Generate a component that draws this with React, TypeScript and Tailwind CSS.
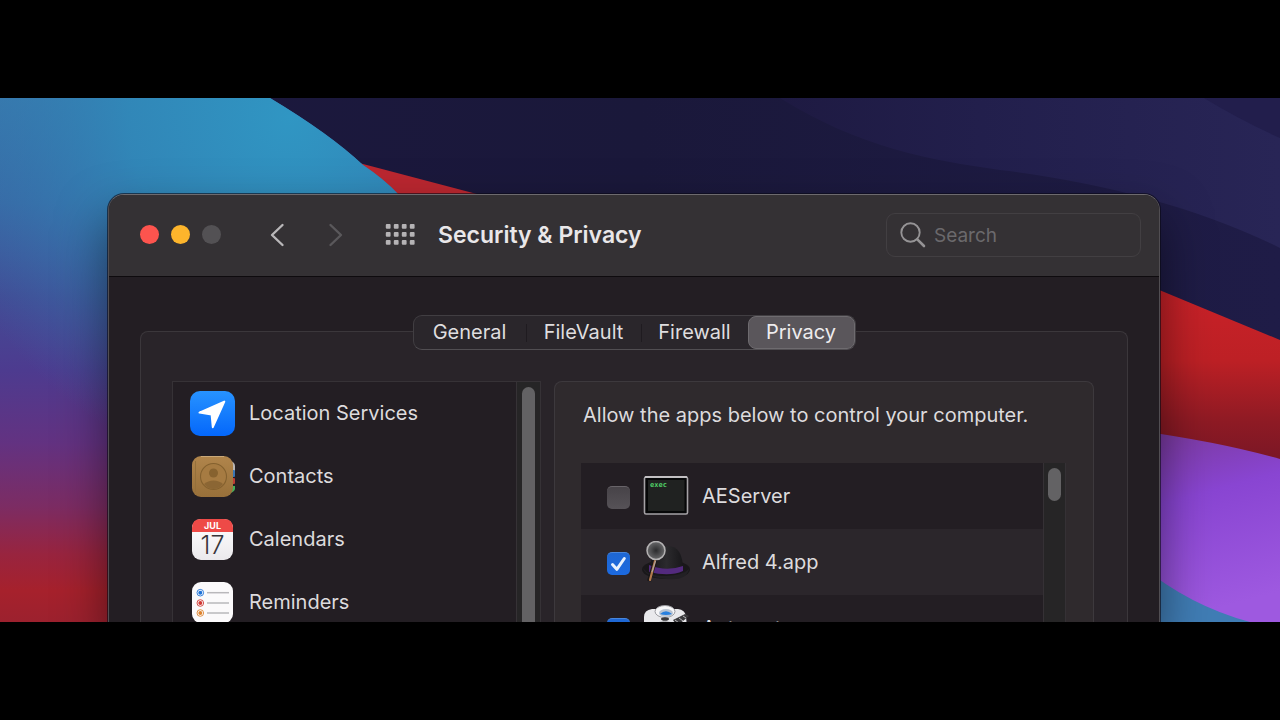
import { useState } from "react";
import type { ReactNode } from "react";

function Wallpaper() {
  return (
    <svg
      aria-hidden="true"
      className="absolute inset-0 h-full w-full"
      viewBox="0 0 1280 524"
      preserveAspectRatio="xMidYMid slice"
    >
      <defs>
        <linearGradient id="dusk" x1="0" y1="0" x2="0" y2="1">
          <stop offset="0" stopColor="#3878ad" />
          <stop offset="0.2" stopColor="#3968a5" />
          <stop offset="0.38" stopColor="#424b95" />
          <stop offset="0.52" stopColor="#4d3b8f" />
          <stop offset="0.66" stopColor="#633281" />
          <stop offset="0.78" stopColor="#7c2c63" />
          <stop offset="0.87" stopColor="#98243f" />
          <stop offset="0.94" stopColor="#a6212c" />
          <stop offset="1" stopColor="#9c212e" />
        </linearGradient>
        <radialGradient id="lagoon" gradientUnits="userSpaceOnUse" cx="290" cy="20" r="360">
          <stop offset="0" stopColor="#3096c3" />
          <stop offset="0.45" stopColor="#308aba" stopOpacity="0.85" />
          <stop offset="1" stopColor="#3474ab" stopOpacity="0" />
        </radialGradient>
        <linearGradient id="night" x1="0" y1="0" x2="1" y2="0">
          <stop offset="0" stopColor="#1c183f" />
          <stop offset="0.5" stopColor="#1a183a" />
          <stop offset="1" stopColor="#1f1c47" />
        </linearGradient>
        <linearGradient id="nightBand" x1="0" y1="0" x2="1" y2="0">
          <stop offset="0" stopColor="#1e1a42" />
          <stop offset="0.4" stopColor="#221f4c" />
          <stop offset="1" stopColor="#282556" />
        </linearGradient>
        <linearGradient id="ember" x1="0" y1="0" x2="0" y2="1">
          <stop offset="0" stopColor="#cb2229" />
          <stop offset="0.4" stopColor="#bd2025" />
          <stop offset="0.72" stopColor="#8d1a24" />
          <stop offset="1" stopColor="#721526" />
        </linearGradient>
        <linearGradient id="violet" x1="0" y1="0" x2="0.2" y2="1">
          <stop offset="0" stopColor="#7a399b" />
          <stop offset="0.4" stopColor="#8945d2" />
          <stop offset="1" stopColor="#9e59e0" />
        </linearGradient>
      </defs>
      <rect width="1280" height="524" fill="url(#night)" />
      <path d="M780 0C860 50 930 62 1000 72C1100 84 1200 110 1280 150V0Z" fill="url(#nightBand)" />
      <path d="M1204 0Q1240 22 1280 40V0Z" fill="#221e4c" />
      <path d="M340 59L363 66L492 100V130H340Z" fill="#bb2730" />
      <path d="M0 0H270Q330 36 363 67Q384 81 398 96L440 150V524H0Z" fill="url(#dusk)" />
      <path d="M0 0H270Q330 36 363 67Q384 81 398 96L440 150V400H0Z" fill="url(#lagoon)" />
      <path d="M1140 184L1280 242V380H1140Z" fill="url(#ember)" />
      <path d="M1140 333Q1220 344 1280 361V524H1140Z" fill="url(#violet)" />
      <path d="M1140 467Q1190 508 1250 524H1140Z" fill="#407db5" />
    </svg>
  );
}

function LocationIcon() {
  return (
    <svg viewBox="0 0 45 45" className="size-[45px]" aria-hidden="true">
      <defs>
        <linearGradient id="locBg" x1="0" y1="0" x2="0" y2="1">
          <stop offset="0" stopColor="#2793ff" />
          <stop offset="1" stopColor="#0467fb" />
        </linearGradient>
      </defs>
      <rect width="45" height="45" rx="10" fill="url(#locBg)" />
      <path
        d="M34.3 10.6L9.5 21.6L21.6 23.4L22.8 36.2Z"
        fill="#fff"
        stroke="#fff"
        strokeWidth="2"
        strokeLinejoin="round"
      />
    </svg>
  );
}

function ContactsIcon() {
  return (
    <svg viewBox="0 0 45 45" className="size-[45px]" aria-hidden="true">
      <defs>
        <linearGradient id="leather" x1="0" y1="0" x2="0" y2="1">
          <stop offset="0" stopColor="#b0854b" />
          <stop offset="1" stopColor="#98703a" />
        </linearGradient>
      </defs>
      <path d="M40 7Q45 8 45 12V17H40Z" fill="#b9b5b3" />
      <rect x="40" y="16" width="5" height="7" rx="1" fill="#3a76b4" />
      <rect x="40" y="24" width="5" height="6" rx="1" fill="#bf3d33" />
      <path d="M40 32H45V35Q44 38 40 39Z" fill="#42b35c" />
      <rect x="2" y="2" width="41" height="41" rx="9" fill="url(#leather)" />
      <path d="M11 2.500H34" stroke="#c9a878" strokeWidth="1" />
      <path d="M5.500 7V38" stroke="#94703b" strokeWidth="1" />
      <circle cx="23.500" cy="22.500" r="13" fill="#a67b42" stroke="#84612f" strokeWidth="1.100" />
      <circle cx="23.500" cy="19" r="4.500" fill="#87622f" />
      <path d="M14 30Q18 26.500 23.500 26.500T33 30Q29 35 23.500 35T14 30Z" fill="#8b6634" />
    </svg>
  );
}

function CalendarIcon() {
  return (
    <svg viewBox="0 0 45 45" className="size-[45px]" aria-hidden="true">
      <defs>
        <linearGradient id="calPage" x1="0" y1="0" x2="0" y2="1">
          <stop offset="0" stopColor="#fff" />
          <stop offset="1" stopColor="#ebe9ec" />
        </linearGradient>
      </defs>
      <rect x="2" y="2" width="41" height="41" rx="9" fill="url(#calPage)" />
      <path d="M2 15V11Q2 2 11 2H34Q43 2 43 11V15Z" fill="#ee4a47" />
      <text x="22.500" y="12" textAnchor="middle" className="font-['Inter',sans-serif] text-[9px] font-bold" fill="#fff">
        JUL
      </text>
      <text x="22.500" y="36.500" textAnchor="middle" className="font-['Inter',sans-serif] text-[25px] font-light" fill="#37353a">
        17
      </text>
    </svg>
  );
}

function RemindersIcon() {
  const rows = [
    { y: 12.7, color: "#1f73d8" },
    { y: 23, color: "#cf3a35" },
    { y: 33, color: "#dd8330" },
  ];
  return (
    <svg viewBox="0 0 45 45" className="size-[45px]" aria-hidden="true">
      <rect x="2" y="2" width="41" height="41" rx="9" fill="#fbfafb" />
      {rows.map((row) => (
        <g key={row.color}>
          <circle cx="10.300" cy={row.y} r="3.300" fill="#fff" stroke={row.color} strokeWidth="0.900" />
          <circle cx="10.300" cy={row.y} r="2" fill={row.color} />
          <path d={`M17 ${row.y}H39`} stroke="#b9b8bb" strokeWidth="1.500" />
        </g>
      ))}
    </svg>
  );
}

function ExecIcon() {
  return (
    <svg viewBox="0 0 46 40" className="h-10 w-[46px]" aria-hidden="true">
      <rect x="1.500" y="1" width="43" height="37" rx="1.500" fill="#060708" stroke="#a5a2a6" strokeWidth="1.600" />
      <path d="M2 1H44" stroke="#d8d6d9" strokeWidth="1.400" />
      <rect x="5" y="4" width="36.500" height="31" fill="#202221" />
      <text x="7" y="10.500" className="font-['DejaVu_Sans_Mono',monospace] text-[7px] font-bold" fill="#4fce66">
        exec
      </text>
    </svg>
  );
}

function AlfredIcon() {
  return (
    <svg viewBox="0 0 48 42" className="h-[42px] w-12" aria-hidden="true">
      <defs>
        <linearGradient id="felt" x1="0" y1="0" x2="1" y2="0">
          <stop offset="0" stopColor="#18171a" />
          <stop offset="0.5" stopColor="#2b2a2d" />
          <stop offset="1" stopColor="#18171a" />
        </linearGradient>
        <radialGradient id="lens">
          <stop offset="0" stopColor="#2b2b2d" />
          <stop offset="1" stopColor="#69696b" />
        </radialGradient>
      </defs>
      <ellipse cx="24" cy="28.500" rx="24" ry="9.500" fill="#19171a" />
      <path d="M1 27Q3 36 24 38T47 28Q41 34 24 35T1 27Z" fill="#222024" />
      <path d="M8 30Q8 5 26 5Q41 5 41 29Q32 36 8 31Z" fill="url(#felt)" />
      <path d="M7 24Q24 31 41 25V30Q28 36 7 31Z" fill="#532a7e" />
      <path d="M13 20L7 40" stroke="#191719" strokeWidth="4" />
      <path d="M13 20L8 39" stroke="#b2794c" strokeWidth="2.200" strokeLinecap="round" />
      <path d="M13.500 20L10 31" stroke="#aaa8aa" strokeWidth="1" />
      <circle cx="14" cy="9.500" r="9" fill="url(#lens)" stroke="#b4b2b3" strokeWidth="1.500" />
    </svg>
  );
}

function AutomatorIcon() {
  return (
    <svg viewBox="0 0 46 46" className="size-[46px]" aria-hidden="true">
      <path d="M1 46V12Q1 5 9 4H35Q42 5 43 11L46 46Z" fill="#e9e9ec" />
      <path d="M30 15L42 9L46 11L34 21Z" fill="#3b3a3d" />
      <path d="M32 15L36 18M36 13L40 16M40 11L43 13" stroke="#b7b7ba" strokeWidth="1" />
      <ellipse cx="22" cy="6.500" rx="10" ry="6" fill="#f6f6f8" stroke="#9b9ba0" strokeWidth="1" />
      <ellipse cx="23" cy="8" rx="7" ry="4" fill="#b9c4d2" />
      <path d="M17 9Q23 3.500 29 9Q23 11 17 9Z" fill="#2880df" />
      <ellipse cx="22" cy="14" rx="4" ry="1.800" fill="#3a393c" />
      <path d="M8 21Q22 12 35 21" stroke="#a9a9ad" strokeWidth="1" fill="none" />
    </svg>
  );
}

const tabs = [
  { name: "General", width: "w-[113px]" },
  { name: "FileVault", width: "w-[115px]" },
  { name: "Firewall", width: "w-[106px]" },
  { name: "Privacy", width: "w-[107px]" },
];

const services: { name: string; icon: ReactNode }[] = [
  { name: "Location Services", icon: <LocationIcon /> },
  { name: "Contacts", icon: <ContactsIcon /> },
  { name: "Calendars", icon: <CalendarIcon /> },
  { name: "Reminders", icon: <RemindersIcon /> },
];

const apps: { id: string; name: string; icon: ReactNode; allowed: boolean }[] = [
  { id: "aeserver", name: "AEServer", icon: <ExecIcon />, allowed: false },
  { id: "alfred", name: "Alfred 4.app", icon: <AlfredIcon />, allowed: true },
  { id: "automator", name: "Automator", icon: <AutomatorIcon />, allowed: true },
];

function Toolbar() {
  return (
    <header className="flex h-[82px] shrink-0 items-center border-b border-[#0e0b0e] bg-[#343134] pr-[18px] pb-0.5 pl-[31px]">
      <div className="flex gap-3">
        <button aria-label="Close" className="size-[19px] rounded-full bg-[#fd544e]" />
        <button aria-label="Minimise" className="size-[19px] rounded-full bg-[#fdb52c]" />
        <button aria-label="Zoom" disabled className="size-[19px] rounded-full bg-[#535154]" />
      </div>
      <button aria-label="Back" className="ml-12">
        <svg viewBox="0 0 16 24" className="h-6 w-4" fill="none" stroke="#b9b7b9" strokeWidth="2.400" strokeLinecap="round" strokeLinejoin="round">
          <path d="M13.500 2L3 12L13.500 22" />
        </svg>
      </button>
      <button aria-label="Forward" disabled className="ml-[43px]">
        <svg viewBox="0 0 16 24" className="h-6 w-4" fill="none" stroke="#5a585b" strokeWidth="2.400" strokeLinecap="round" strokeLinejoin="round">
          <path d="M2.500 2L13 12L2.500 22" />
        </svg>
      </button>
      <button aria-label="Show all" className="ml-[42px]">
        <svg viewBox="0 0 28 22" className="h-[22px] w-7 overflow-visible" fill="#b5b3b5">
          {[0, 8, 16, 24].map((x) =>
            [0.5, 8.5, 16.5].map((y) => <rect key={`${x}-${y}`} x={x - 0.2} y={y - 0.5} width="4.800" height="4.800" rx="1" />),
          )}
        </svg>
      </button>
      <h1 className="ml-6 text-[23px] leading-7 font-semibold text-[#e9e7e9]">Security &amp; Privacy</h1>
      <label className="ml-auto flex h-11 w-[255px] items-center gap-2 rounded-[9px] border border-[#423f42] pr-2 pl-[13px]">
        <span className="sr-only">Search settings</span>
        <svg viewBox="0 0 26 26" className="size-[26px] shrink-0" fill="none" stroke="#959395" strokeLinecap="round" aria-hidden="true">
          <circle cx="10.500" cy="10.500" r="9.200" strokeWidth="1.900" />
          <path d="M17.300 17.300L24 24" strokeWidth="2.600" />
        </svg>
        <input
          type="search"
          placeholder="Search"
          className="h-8 min-w-0 flex-1 bg-transparent pt-0.5 text-[19px] leading-7 outline-none placeholder:text-[#6b696c]"
        />
      </label>
    </header>
  );
}

function TabBar({ selected, onSelect }: { selected: string; onSelect: (name: string) => void }) {
  return (
    <div
      role="tablist"
      className="relative z-10 mx-auto flex h-[35px] items-center rounded-[9px] border border-[#413e42] border-b-[#514e52] bg-[#2a262b]"
    >
      {tabs.map((tab, index) => {
        const active = tab.name === selected;
        const divided = index < tabs.length - 2;
        return (
          <div key={tab.name} className={`flex h-full items-center ${tab.width}`}>
            <button
              role="tab"
              aria-selected={active}
              onClick={() => onSelect(tab.name)}
              className={`h-full flex-1 rounded-lg border pb-0.5 text-xl leading-6 ${
                active ? "border-[#6e6b6f] bg-[#5a565b] text-[#eeecee]" : "border-transparent text-[#dfdddf]"
              }`}
            >
              {tab.name}
            </button>
            {divided && <span className="h-[18px] w-px bg-[#1f1b20]" />}
          </div>
        );
      })}
    </div>
  );
}

function ServiceList() {
  return (
    <div className="flex w-[369px] shrink-0 border border-b-0 border-[#363236] bg-[#231e23]">
      <ul className="min-w-0 flex-1">
        {services.map((service) => (
          <li key={service.name}>
            <button className="flex h-[63px] w-full items-center gap-3.5 pl-[17px] text-left text-xl leading-6 text-[#dddbdd]">
              {service.icon}
              <span className="pb-0.5">{service.name}</span>
            </button>
          </li>
        ))}
      </ul>
      <div className="w-6 border-l border-[#363236] bg-[#262526] px-[5px] pt-[5px]">
        <div className="h-full w-[13px] rounded-t-full bg-[#636264]" />
      </div>
    </div>
  );
}

function AppRow({ app }: { app: (typeof apps)[number] }) {
  const [allowed, setAllowed] = useState(app.allowed);
  return (
    <li className="flex h-[66px] items-center pl-[26px] odd:bg-[#231e23] even:bg-[#2b262b]">
      <span className="grid shrink-0 pt-0.5">
        <input
          id={app.id}
          type="checkbox"
          checked={allowed}
          onChange={(event) => setAllowed(event.target.checked)}
          className="col-start-1 row-start-1 size-[23px] appearance-none rounded-[5px] border-t border-[#686469] bg-linear-to-b from-[#474348] to-[#565257] checked:border-[#4886dc] checked:from-[#1e67d3] checked:to-[#1c6ae0]"
        />
        {allowed && (
          <svg
            viewBox="0 0 23 23"
            className="pointer-events-none col-start-1 row-start-1 size-[23px]"
            fill="none"
            stroke="#e8f1fc"
            strokeWidth="3"
            strokeLinecap="round"
            strokeLinejoin="round"
            aria-hidden="true"
          >
            <path d="M5.500 12.500L9.800 17.300L17.300 6.500" />
          </svg>
        )}
      </span>
      <label htmlFor={app.id} className="flex flex-1 items-center">
        <span className="ml-3 flex w-12 justify-center">{app.icon}</span>
        <span className="ml-3 text-xl leading-6 text-[#dddbdd]">{app.name}</span>
      </label>
    </li>
  );
}

function AppPanel() {
  return (
    <section className="flex min-w-0 flex-1 flex-col rounded-t-lg border border-b-0 border-[#3d393d] bg-[#2f2a2d] pt-[19px] pr-[27px] pl-[26px]">
      <h2 className="px-0.5 text-xl leading-7 whitespace-nowrap text-[#dddbdd]">
        Allow the apps below to control your computer.
      </h2>
      <div className="mt-[34px] flex flex-1">
        <ul className="min-w-0 flex-1">
          {apps.map((app) => (
            <AppRow key={app.id} app={app} />
          ))}
        </ul>
        <div className="w-[23px] border-x border-[#353135] bg-[#262526] px-1 pt-[5px]">
          <div className="h-[33px] w-[13px] rounded-full bg-[#636264]" />
        </div>
      </div>
    </section>
  );
}

export default function App() {
  const [selected, setSelected] = useState("Privacy");
  return (
    <div className="flex h-screen flex-col bg-black py-[98px] font-['Inter',sans-serif]">
      <main className="relative min-h-0 flex-1 overflow-hidden">
        <Wallpaper />
        <div className="relative flex h-full flex-col pt-24 pr-[120px] pl-[108px]">
          <div className="flex flex-1 flex-col overflow-hidden rounded-t-2xl border border-b-0 border-[#514e52] border-t-[#6d6a6e] bg-[#231e23] shadow-[0_0_0_1px_rgba(10,8,20,0.6),0_24px_50px_rgba(0,0,0,0.5)]">
            <Toolbar />
            <div className="flex min-h-0 flex-1 flex-col px-[31px] pt-[38px]">
              <TabBar selected={selected} onSelect={setSelected} />
              <div className="-mt-[19px] flex min-h-0 flex-1 gap-[13px] rounded-t-lg border border-b-0 border-[#3b373b] bg-[#292429] pt-[49px] pr-[33px] pl-[31px]">
                <ServiceList />
                <AppPanel />
              </div>
            </div>
          </div>
        </div>
      </main>
    </div>
  );
}
